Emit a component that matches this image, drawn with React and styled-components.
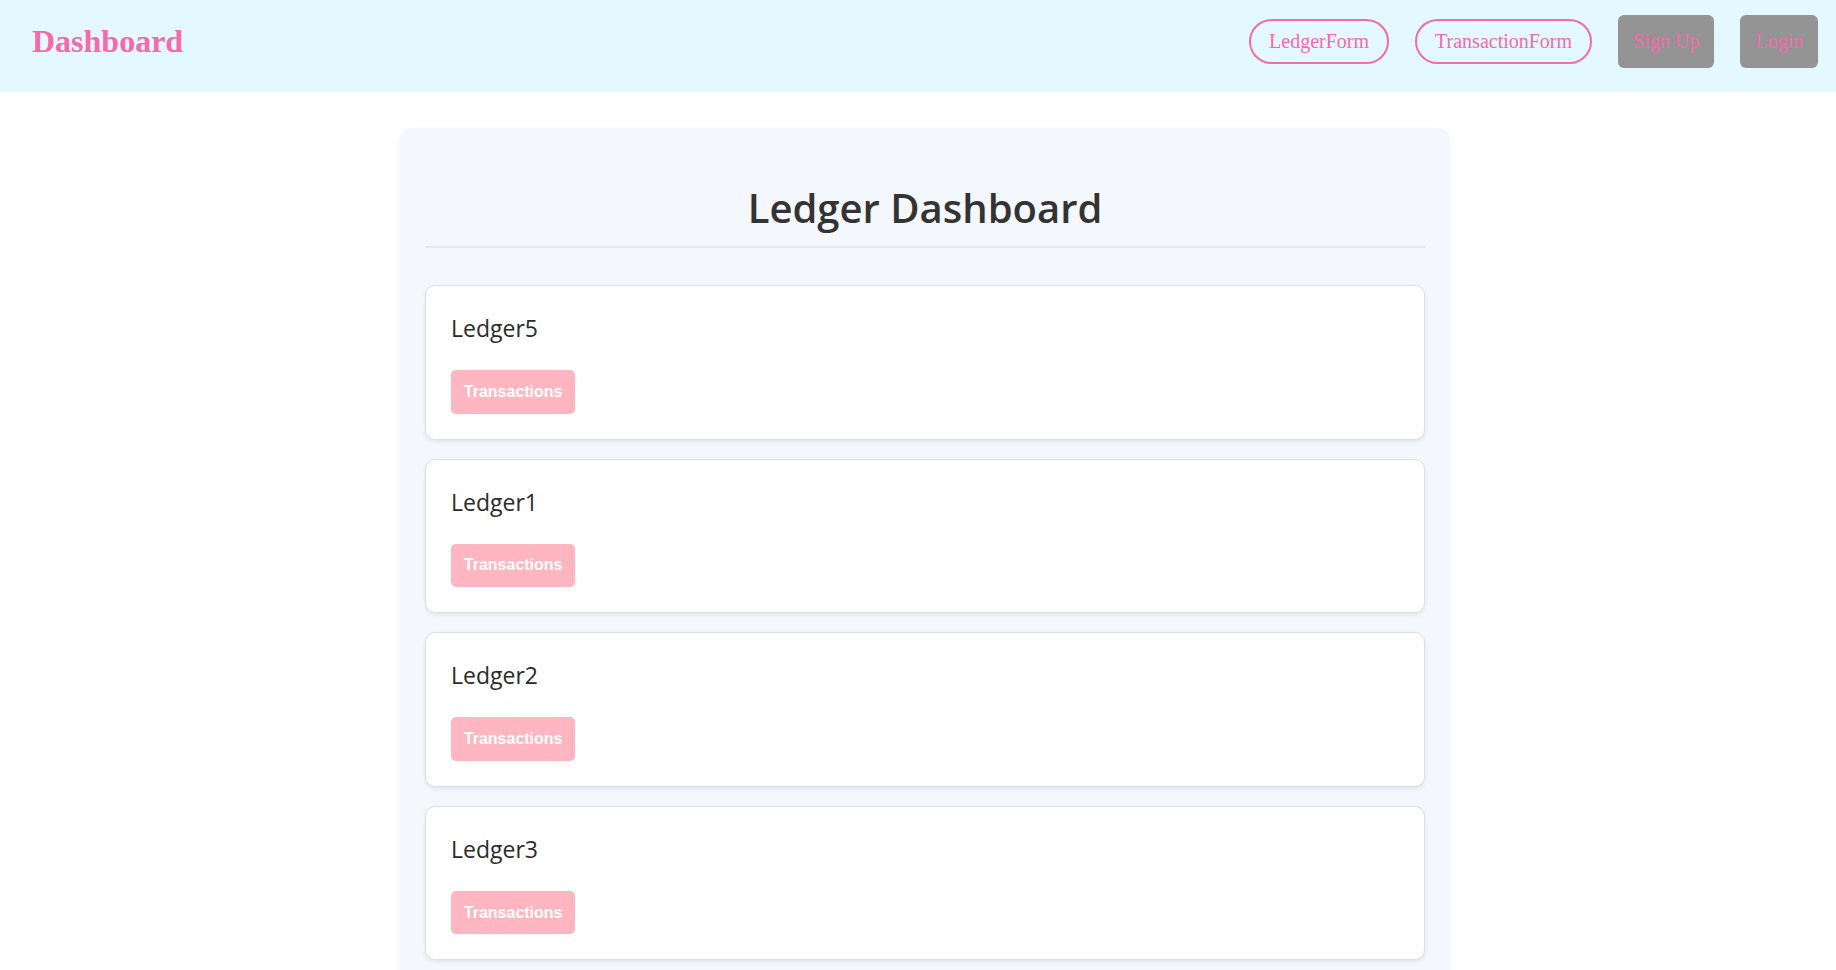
import React from 'react';
import styled, { createGlobalStyle } from 'styled-components';

const GlobalStyle = createGlobalStyle`
  body {
    margin: 0;
    background: #ffffff;
    font-family: "Liberation Serif", "Times New Roman", serif;
  }
`

const Nav = styled.nav`
  display: flex;
  align-items: center;
  justify-content: space-between;
  height: 92px;
  box-sizing: border-box;
  padding: 0 18px 10px 32px;
  background-color: #e3f8ff;
`
const Brand = styled.h1`
  margin: 0;
  font-family: "Liberation Serif", serif;
  font-size: 32px;
  font-weight: 700;
  color: #f56aab;
`
const NavLinks = styled.div`
  display: flex;
  align-items: center;
  gap: 26px;
`
const PillLink = styled.a`
  padding: 9px 18px;
  border: 2px solid #f56aab;
  border-radius: 30px;
  font-family: "Liberation Serif", serif;
  font-size: 20px;
  color: #f56aab;
  text-decoration: none;
  cursor: pointer;
`
const GrayButton = styled.button`
  padding: 15px;
  border: none;
  border-radius: 6px;
  background-color: #949494;
  font-family: "Liberation Serif", serif;
  font-size: 20px;
  color: #f56aab;
  cursor: pointer;
`

const Main = styled.main`
  display: flex;
  justify-content: center;
  padding: 36px 0 0 14px;
`
const Panel = styled.section`
  width: 1000px;
  padding: 0 25px 25px;
  background-color: #f4f7fb;
  border-radius: 12px;
  box-shadow: 0 4px 10px rgba(0, 0, 0, 0.05);
`
const Title = styled.h2`
  margin: 0 0 37px;
  padding: 52px 0 11px;
  border-bottom: 2px solid #e6e8ec;
  text-align: center;
  font-family: "Open Sans", sans-serif;
  font-size: 40px;
  font-weight: 600;
  color: #333333;
`
const List = styled.div`
  display: flex;
  flex-direction: column;
  gap: 19px;
`
const LedgerCard = styled.div`
  padding: 26px 25px 25px;
  background-color: #ffffff;
  border: 1px solid #dde0e4;
  border-radius: 10px;
  box-shadow: 0 2px 4px rgba(0, 0, 0, 0.08);
`
const LedgerName = styled.h3`
  margin: 0 0 26px;
  font-family: "Open Sans", sans-serif;
  font-size: 23px;
  font-weight: 500;
  color: #2b2b2b;
`
const TxButton = styled.button`
  padding: 0.8rem;
  border: none;
  border-radius: 5px;
  background-color: #ffb6c1;
  font-family: "Liberation Sans", Arial, sans-serif;
  font-size: 16px;
  font-weight: 700;
  color: #ffffff;
  cursor: pointer;
`

const ledgers = ['Ledger5', 'Ledger1', 'Ledger2', 'Ledger3']

const App = () => {
  return (
    <>
      <GlobalStyle />
      <Nav>
        <Brand>Dashboard</Brand>
        <NavLinks>
          <PillLink>LedgerForm</PillLink>
          <PillLink>TransactionForm</PillLink>
          <GrayButton>Sign Up</GrayButton>
          <GrayButton>Login</GrayButton>
        </NavLinks>
      </Nav>
      <Main>
        <Panel>
          <Title>Ledger Dashboard</Title>
          <List>
            {ledgers.map((name) => (
              <LedgerCard key={name}>
                <LedgerName>{name}</LedgerName>
                <TxButton>Transactions</TxButton>
              </LedgerCard>
            ))}
          </List>
        </Panel>
      </Main>
    </>
  )
}

export default App
